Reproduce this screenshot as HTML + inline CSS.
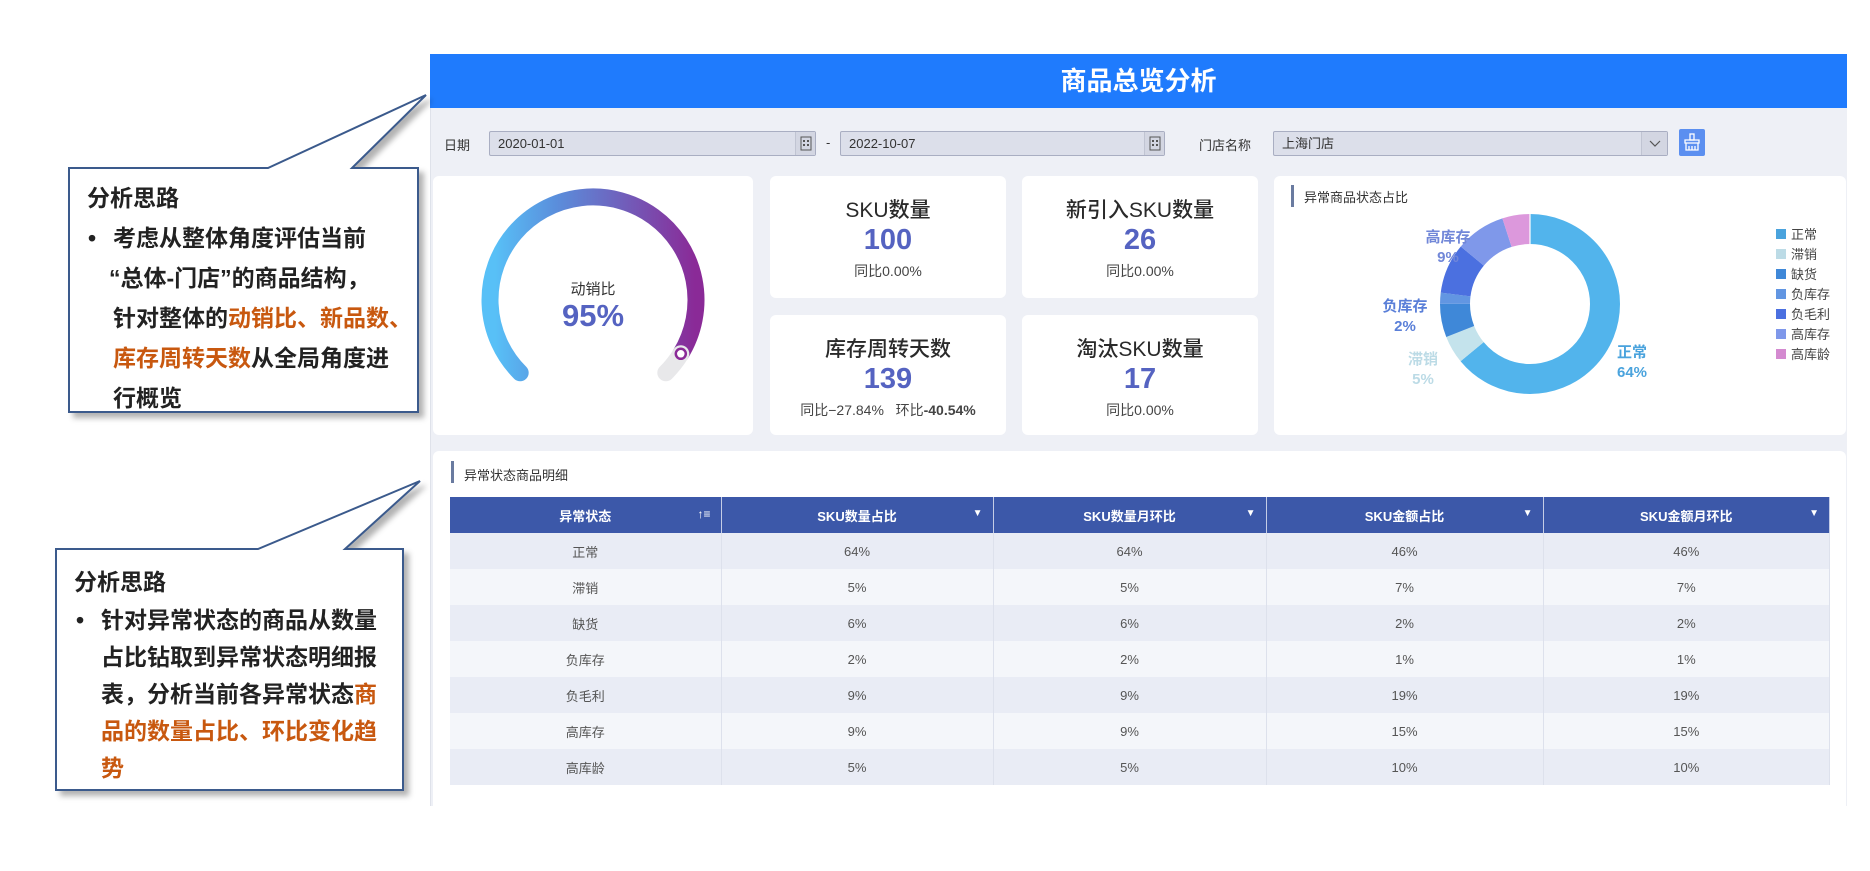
<!DOCTYPE html>
<html><head><meta charset="utf-8">
<style>
*{margin:0;padding:0;box-sizing:border-box}
body{width:1870px;height:871px;background:#fff;position:relative;overflow:hidden;font-family:"Liberation Sans","Noto Sans CJK SC",sans-serif;color:#333}
.abs{position:absolute}
#dash{left:430px;top:108px;width:1417px;height:698px;background:#eef0f6;border-left:1px solid #dfe2ea}
#hdr{left:430px;top:54px;width:1417px;height:54px;background:#1f7bfd;color:#fff;font-size:26px;font-weight:bold;text-align:center;line-height:54px}
.lbl{font-size:13px;color:#333;top:135px}
.inp{top:131px;height:25px;background:#dcdfea;border:1px solid #a9aec2;border-radius:2px;font-size:13px;color:#333;line-height:23px;padding-left:8px}
.inp .ic{position:absolute;right:0;top:0;width:20px;height:23px;border-left:1px solid #c0c4d2;background:#d3d6e2}
.card{background:#fff;border-radius:6px}
.t1{font-size:21px;color:#2a2a2a;text-align:center;width:100%;position:absolute;font-weight:500}
.v1{font-size:29px;color:#5563c1;text-align:center;width:100%;position:absolute;font-weight:bold}
.s1{font-size:14px;color:#444;text-align:center;width:100%;position:absolute}
table{border-collapse:collapse;position:absolute;left:450px;top:497px;width:1380px;font-size:13px}
th{background:#3c58a9;color:#fff;height:36px;font-weight:bold;border-right:1px solid #c5cde6;position:relative;font-size:13px}
th .dn{position:absolute;right:10px;top:11px;font-size:10px}
td{height:36px;text-align:center;color:#555;border-right:1px solid #dde1ec}
tr:nth-child(even) td{background:#e9ecf5}
tr:nth-child(odd) td{background:#f4f6fa}
.co{font-size:23px;font-weight:bold;color:#222;line-height:40px}
.or{color:#c8580f}
</style></head><body>
<div id="dash" class="abs"></div>
<div id="hdr" class="abs">商品总览分析</div>

<div class="abs lbl" style="left:444px">日期</div>
<div class="abs inp" style="left:489px;width:327px">2020-01-01<div class="ic"><svg width="20" height="23"><rect x="5" y="5" width="10" height="13" fill="none" stroke="#555" stroke-width="1"/><g fill="#555"><rect x="7" y="8" width="2" height="2"/><rect x="11" y="8" width="2" height="2"/><rect x="7" y="12" width="2" height="2"/><rect x="11" y="12" width="2" height="2"/></g></svg></div></div>
<div class="abs lbl" style="left:826px">-</div>
<div class="abs inp" style="left:840px;width:325px">2022-10-07<div class="ic"><svg width="20" height="23"><rect x="5" y="5" width="10" height="13" fill="none" stroke="#555" stroke-width="1"/><g fill="#555"><rect x="7" y="8" width="2" height="2"/><rect x="11" y="8" width="2" height="2"/><rect x="7" y="12" width="2" height="2"/><rect x="11" y="12" width="2" height="2"/></g></svg></div></div>
<div class="abs lbl" style="left:1199px">门店名称</div>
<div class="abs inp" style="left:1273px;width:395px">上海门店<div class="ic" style="width:26px"><svg width="26" height="23"><path d="M8 9l5 5 5-5" fill="none" stroke="#555" stroke-width="1.2"/></svg></div></div>
<div class="abs" style="left:1679px;top:129px;width:26px;height:27px;background:#5b8ff0;border-radius:2px"><svg width="26" height="27"><g fill="none" stroke="#fff" stroke-width="1.3"><rect x="11" y="5" width="4" height="6"/><path d="M6 11h14v3H6zM7 14v7h12v-7M10 17v4M13 17v4M16 17v4"/></g></svg></div>

<div class="abs card" style="left:433px;top:176px;width:320px;height:259px"></div>
<svg class="abs" style="left:0;top:0" width="1870" height="871">
<defs>
<linearGradient id="gg" gradientUnits="userSpaceOnUse" x1="495" y1="330" x2="695" y2="330">
<stop offset="0" stop-color="#58c0f7"/><stop offset="0.3" stop-color="#5a8fdc"/><stop offset="0.55" stop-color="#6a6cc4"/><stop offset="1" stop-color="#8a2a97"/></linearGradient>
</defs>
<path d="M520.2 372.8 A103 103 0 1 1 680.8 353.8" fill="none" stroke="url(#gg)" stroke-width="17" stroke-linecap="round"/>
<path d="M680.8 353.8 A103 103 0 0 1 665.8 372.8" fill="none" stroke="#e8e8ea" stroke-width="17" stroke-linecap="round"/>
<circle cx="680.8" cy="353.8" r="5" fill="#fff" stroke="#8a2a97" stroke-width="2.5"/>
</svg>
<div class="abs" style="left:533px;top:278px;width:120px;text-align:center;font-size:15px;color:#333">动销比</div>
<div class="abs" style="left:533px;top:298px;width:120px;text-align:center;font-size:31px;color:#5563c1;font-weight:bold">95%</div>

<div class="abs card" style="left:770px;top:176px;width:236px;height:122px"><div class="t1" style="top:18px">SKU数量</div><div class="v1" style="top:48px">100</div><div class="s1" style="top:85px">同比0.00%</div></div>
<div class="abs card" style="left:1022px;top:176px;width:236px;height:122px"><div class="t1" style="top:18px">新引入SKU数量</div><div class="v1" style="top:48px">26</div><div class="s1" style="top:85px">同比0.00%</div></div>
<div class="abs card" style="left:770px;top:315px;width:236px;height:120px"><div class="t1" style="top:18px">库存周转天数</div><div class="v1" style="top:48px">139</div><div class="s1" style="top:85px">同比−27.84%&nbsp;&nbsp; 环比<b>-40.54%</b></div></div>
<div class="abs card" style="left:1022px;top:315px;width:236px;height:120px"><div class="t1" style="top:18px">淘汰SKU数量</div><div class="v1" style="top:48px">17</div><div class="s1" style="top:85px">同比0.00%</div></div>

<div class="abs card" style="left:1274px;top:176px;width:572px;height:259px"></div>
<div class="abs" style="left:1291px;top:185px;width:3px;height:22px;background:#6a7ba0"></div>
<div class="abs" style="left:1304px;top:187px;font-size:13px;color:#333">异常商品状态占比</div>
<svg class="abs" style="left:0;top:0" width="1870" height="871">
<g transform="rotate(-90 1530 304)" fill="none" stroke-width="30">
<circle cx="1530" cy="304" r="75" stroke="#52b4ec" stroke-dasharray="301.6 1000" stroke-dashoffset="0"/>
<circle cx="1530" cy="304" r="75" stroke="#c4e3ec" stroke-dasharray="23.56 1000" stroke-dashoffset="-301.6"/>
<circle cx="1530" cy="304" r="75" stroke="#3f88d8" stroke-dasharray="28.27 1000" stroke-dashoffset="-325.16"/>
<circle cx="1530" cy="304" r="75" stroke="#6296e2" stroke-dasharray="9.42 1000" stroke-dashoffset="-353.43"/>
<circle cx="1530" cy="304" r="75" stroke="#4b70e0" stroke-dasharray="42.41 1000" stroke-dashoffset="-362.85"/>
<circle cx="1530" cy="304" r="75" stroke="#7f98ea" stroke-dasharray="42.41 1000" stroke-dashoffset="-405.26"/>
<circle cx="1530" cy="304" r="75" stroke="#dc98dc" stroke-dasharray="23.56 1000" stroke-dashoffset="-447.67"/>
</g>
<g stroke="#fff" stroke-width="1.2"><line x1="1530" y1="214" x2="1530" y2="244"/></g>
<g font-size="15" font-weight="bold" text-anchor="middle" font-family="Liberation Sans,Noto Sans CJK SC,sans-serif">
<text x="1448" y="242" fill="#7187d8">高库存</text><text x="1448" y="262" fill="#7187d8">9%</text>
<text x="1405" y="311" fill="#5a7fd8">负库存</text><text x="1405" y="331" fill="#5a7fd8">2%</text>
<text x="1423" y="364" fill="#bcdbe6">滞销</text><text x="1423" y="384" fill="#bcdbe6">5%</text>
<text x="1632" y="357" fill="#4aa3dd">正常</text><text x="1632" y="377" fill="#4aa3dd">64%</text>
</g>
<g font-size="13" fill="#444" font-family="Liberation Sans,Noto Sans CJK SC,sans-serif">
<rect x="1776" y="229" width="10" height="10" fill="#4aa3dd"/><text x="1791" y="239">正常</text>
<rect x="1776" y="249" width="10" height="10" fill="#bcdbe6"/><text x="1791" y="259">滞销</text>
<rect x="1776" y="269" width="10" height="10" fill="#3f88d8"/><text x="1791" y="279">缺货</text>
<rect x="1776" y="289" width="10" height="10" fill="#6296e2"/><text x="1791" y="299">负库存</text>
<rect x="1776" y="309" width="10" height="10" fill="#4b70e0"/><text x="1791" y="319">负毛利</text>
<rect x="1776" y="329" width="10" height="10" fill="#7f98ea"/><text x="1791" y="339">高库存</text>
<rect x="1776" y="349" width="10" height="10" fill="#d48ad0"/><text x="1791" y="359">高库龄</text>
</g>
</svg>

<div class="abs" style="left:433px;top:451px;width:1413px;height:355px;background:#fff;border-radius:6px 6px 0 0"></div>
<div class="abs" style="left:451px;top:461px;width:3px;height:22px;background:#6a7ba0"></div>
<div class="abs" style="left:464px;top:465px;font-size:13px;color:#333">异常状态商品明细</div>
<table>
<tr><th style="width:271px">异常状态<span class="dn" style="font-size:12px;top:10px">↑≡</span></th><th style="width:272px">SKU数量占比<span class="dn">▼</span></th><th style="width:273px">SKU数量月环比<span class="dn">▼</span></th><th style="width:277px">SKU金额占比<span class="dn">▼</span></th><th>SKU金额月环比<span class="dn">▼</span></th></tr>
<tr><td>正常</td><td>64%</td><td>64%</td><td>46%</td><td>46%</td></tr>
<tr><td>滞销</td><td>5%</td><td>5%</td><td>7%</td><td>7%</td></tr>
<tr><td>缺货</td><td>6%</td><td>6%</td><td>2%</td><td>2%</td></tr>
<tr><td>负库存</td><td>2%</td><td>2%</td><td>1%</td><td>1%</td></tr>
<tr><td>负毛利</td><td>9%</td><td>9%</td><td>19%</td><td>19%</td></tr>
<tr><td>高库存</td><td>9%</td><td>9%</td><td>15%</td><td>15%</td></tr>
<tr><td>高库龄</td><td>5%</td><td>5%</td><td>10%</td><td>10%</td></tr>
</table>

<svg class="abs" style="left:0;top:0" width="1870" height="871">
<defs><filter id="sh" x="-10%" y="-10%" width="130%" height="130%"><feDropShadow dx="5" dy="5" stdDeviation="3" flood-color="#000" flood-opacity="0.3"/></filter></defs>
<path d="M69 168 L268 168 L426 95 L352 168 L418 168 L418 412 L69 412 Z" fill="#fff" stroke="#3b5a8c" stroke-width="2" filter="url(#sh)"/>
<path d="M56 549 L258 549 L420 481 L345 549 L403 549 L403 790 L56 790 Z" fill="#fff" stroke="#3b5a8c" stroke-width="2" filter="url(#sh)"/>
</svg>
<div class="abs co" style="left:87px;top:178px">分析思路</div>
<div class="abs co" style="left:88px;top:218px">•</div>
<div class="abs co" style="left:113px;top:218px;width:310px">考虑从整体角度评估当前<br><span style="margin-left:-4px">“总体-门店”的商品结构，</span><br>针对整体的<span class="or">动销比、新品数、</span><br><span class="or">库存周转天数</span>从全局角度进<br>行概览</div>
<div class="abs co" style="left:74px;top:562px">分析思路</div>
<div class="abs co" style="left:76px;top:600px">•</div>
<div class="abs co" style="left:101px;top:602px;width:300px;line-height:37px">针对异常状态的商品从数量<br>占比钻取到异常状态明细报<br>表，分析当前各异常状态<span class="or">商</span><br><span class="or">品的数量占比、环比变化趋</span><br><span class="or">势</span></div>
</body></html>
